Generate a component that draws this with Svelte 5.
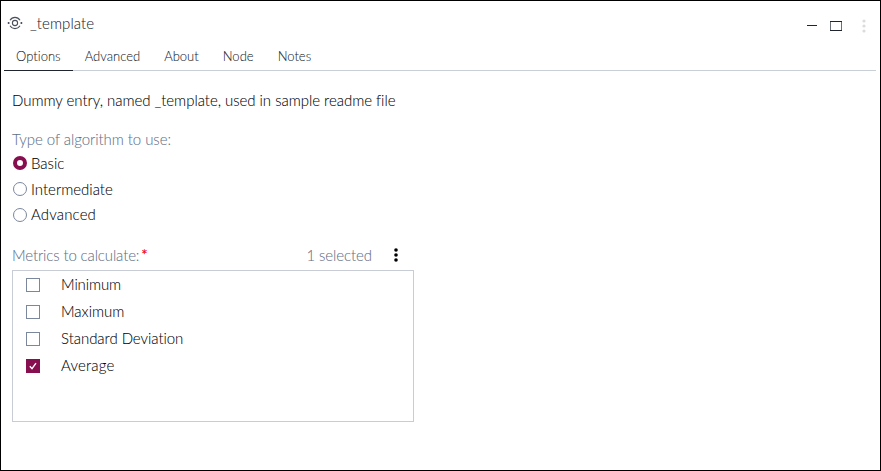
<script>
  const tabs = ['Options', 'Advanced', 'About', 'Node', 'Notes'];
  const algorithms = ['Basic', 'Intermediate', 'Advanced'];
  const metrics = ['Minimum', 'Maximum', 'Standard Deviation', 'Average'];

  let activeTab = $state('Options');
  let algorithm = $state('Basic');
  let selected = $state(['Average']);

  function toggle(metric) {
    selected = selected.includes(metric)
      ? selected.filter((m) => m !== metric)
      : [...selected, metric];
  }
</script>

<main class="panel">
  <header class="titlebar">
    <svg class="node-icon" width="16" height="14" viewBox="0 0 16 14" fill="none" stroke="#4a505a">
      <circle cx="8" cy="7" r="2.6" stroke-width="1.1" />
      <path d="M3 4.2Q4.8 1.4 8 1.4T13 4.2M3 9.8Q4.8 12.6 8 12.6T13 9.8" stroke-width="1.1" />
      <circle cx="1.6" cy="7" r="1" fill="#3c4350" stroke="none" />
      <circle cx="14.4" cy="7" r="1" fill="#3c4350" stroke="none" />
    </svg>
    <h1>_template</h1>
    <div class="window-actions">
      <button aria-label="Minimize">
        <svg width="10" height="11" viewBox="0 0 10 11"><path d="M0 5.5h10" stroke="#20242f" /></svg>
      </button>
      <button aria-label="Maximize">
        <svg width="12" height="10" viewBox="0 0 12 10" fill="none">
          <path d="M.5 0v10M11.5 0v10" stroke="#6b7078" />
          <path d="M0 .5h12M0 9.5h12" stroke="#20242f" />
        </svg>
      </button>
      <button aria-label="More" disabled>
        <svg width="4" height="14" viewBox="0 0 4 14" fill="#dcdcdc">
          <circle cx="2" cy="2" r="1.6" /><circle cx="2" cy="7" r="1.6" /><circle cx="2" cy="12" r="1.6" />
        </svg>
      </button>
    </div>
  </header>

  <nav class="tabs">
    {#each tabs as tab}
      <button class="tab" class:active={tab === activeTab} onclick={() => (activeTab = tab)}>{tab}</button>
    {/each}
  </nav>

  <section class="content">
    <p class="description">Dummy entry, named _template, used in sample readme file</p>

    <div class="label type-label">Type of algorithm to use:</div>
    <div class="radios">
      {#each algorithms as item}
        <button class="radio" role="radio" aria-checked={item === algorithm} onclick={() => (algorithm = item)}>
          <span class="dot" class:on={item === algorithm}></span>
          <span class="opt-{item.toLowerCase()}">{item}</span>
        </button>
      {/each}
    </div>

    <div class="list-head">
      <span class="label metrics-label">Metrics to calculate:</span><span class="required">*</span>
      <span class="count">{selected.length} selected</span>
      <button class="more" aria-label="List actions">
        <svg width="4" height="14" viewBox="0 0 4 14" fill="#000">
          <circle cx="2" cy="2" r="1.8" /><circle cx="2" cy="7" r="1.8" /><circle cx="2" cy="12" r="1.8" />
        </svg>
      </button>
    </div>
    <div class="list">
      {#each metrics as metric}
        <button class="row" role="checkbox" aria-checked={selected.includes(metric)} onclick={() => toggle(metric)}>
          <span class="box" class:on={selected.includes(metric)}>
            {#if selected.includes(metric)}
              <svg width="14" height="14" viewBox="0 0 14 14" fill="none" stroke="#fff" stroke-width="1.4">
                <path d="M3.8 7.3l2.2 2.4 4-5.6" />
              </svg>
            {/if}
          </span>
          <span class="name metric-{metric.split(' ')[0].toLowerCase()}">{metric}</span>
        </button>
      {/each}
    </div>
  </section>
</main>

<style>
  :global(body) { margin: 0; background: #fff; }
  .panel {
    box-sizing: border-box;
    width: 881px;
    height: 471px;
    border: 1px solid #000;
    background: #fff;
    color: #000;
    font: 300 15px/20px Lato, "Liberation Sans", sans-serif;
    font-variant-ligatures: none;
    -webkit-text-stroke: 0.06px currentColor;
  }
  button {
    display: flex;
    align-items: center;
    margin: 0;
    padding: 0;
    border: 0;
    background: none;
    color: inherit;
    font: inherit;
    font-variant-ligatures: none;
    letter-spacing: inherit;
    white-space: nowrap;
  }
  svg { display: block; flex: none; }
  .titlebar { display: flex; align-items: center; height: 44px; padding: 0 14px 0 6px; }
  h1 { margin: 0 0 0 7px; font: inherit; color: #20242f; letter-spacing: 0.08px; }
  .window-actions { display: flex; align-items: center; margin: 5px 0 0 auto; }
  .window-actions button { margin-left: 13px; }
  .window-actions button:last-child { margin-left: 20px; }
  .tabs { display: flex; height: 25px; margin: 0 4px 0 3px; border-bottom: 1px solid #c8cfd7; }
  .tab {
    height: 26px;
    padding: 0 12px 4px;
    box-sizing: border-box;
    border-bottom: 1px solid transparent;
    color: #20242f;
    font-size: 13px;
    letter-spacing: 0.02px;
  }
  .tab.active { border-bottom-color: #20242f; }
  .content { width: 402px; padding: 19px 0 0 11px; }
  .description { margin: 0; white-space: nowrap; letter-spacing: -0.035px; }
  .label, .count { color: #616f88; white-space: nowrap; }
  .type-label { margin-top: 19px; letter-spacing: -0.06px; }
  .metrics-label { letter-spacing: -0.13px; }
  .count { margin-left: auto; letter-spacing: -0.08px; }
  .radios { padding-top: 1px; }
  .radio { height: 26px; gap: 4px; }
  .radio:last-child { height: 25px; }
  .radio:last-child .dot { margin-top: 1px; }
  .opt-advanced { margin-top: -1px; letter-spacing: 0.15px; }
  .dot { box-sizing: border-box; width: 14px; height: 14px; margin-left: 1px; border: 1px solid #7b879c; border-radius: 50%; }
  .dot.on { border: 4px solid #870f4f; }
  .list-head { display: flex; align-items: center; height: 20px; margin-top: 18px; }
  .required { margin-left: 2px; color: #f00018; -webkit-text-stroke-width: 0.3px; }
  .more { margin: 0 16px 0 22px; }
  .list { box-sizing: border-box; height: 152px; margin-top: 5px; border: 1px solid #c8cdd5; }
  .row { height: 27px; padding-left: 13px; gap: 21px; }
  .name { padding-bottom: 1px; }
  .box { box-sizing: border-box; width: 14px; height: 14px; border: 1px solid #7b879c; }
  .box.on { border: 0; background: #870f4f; }
  .metric-minimum { letter-spacing: -0.12px; }
  .metric-standard { letter-spacing: -0.05px; }
  .metric-average { letter-spacing: 0.2px; }
</style>
